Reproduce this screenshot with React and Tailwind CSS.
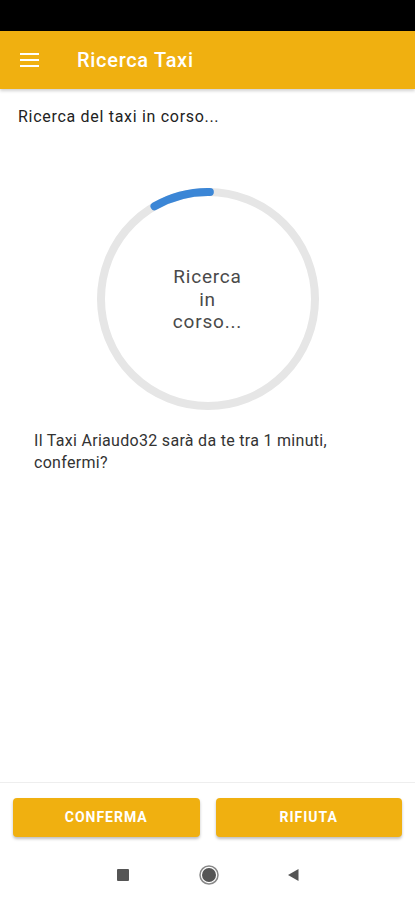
export default function App() {
  const cx = 111, cy = 111, r = 107;
  const a0 = (-30 * Math.PI) / 180;
  const a1 = (1 * Math.PI) / 180;
  const x0 = cx + r * Math.sin(a0), y0 = cy - r * Math.cos(a0);
  const x1 = cx + r * Math.sin(a1), y1 = cy - r * Math.cos(a1);
  return (
    <div className="h-[900px] w-[415px] flex flex-col bg-white overflow-hidden" style={{ fontFamily: "Roboto, 'Noto Sans', sans-serif" }}>
      <div className="h-[31px] bg-black shrink-0" />
      <div className="h-[58px] bg-[#f0b010] shrink-0 flex items-center shadow-[0_2px_3px_rgba(0,0,0,0.18)] relative z-10">
        <div className="w-[77px] pl-[20px] flex items-center">
          <svg width="20" height="14" viewBox="0 0 20 14">
            <rect x="0" y="0" width="19" height="2" fill="#fff" />
            <rect x="0" y="6" width="19" height="2" fill="#fff" />
            <rect x="0" y="12" width="19" height="2" fill="#fff" />
          </svg>
        </div>
        <div className="text-white text-[20px] tracking-[0.7px] font-medium">Ricerca Taxi</div>
      </div>
      <div className="flex-1 flex flex-col">
        <div className="pt-[18px] pl-[18px] text-[16px] tracking-[0.7px] leading-[20px] text-[#222]">Ricerca del taxi in corso...</div>
        <div className="mt-[61px] flex justify-center">
          <div className="relative w-[222px] h-[222px]">
            <svg width="222" height="222" viewBox="0 0 222 222">
              <circle cx={cx} cy={cy} r={r} fill="none" stroke="#e6e6e6" strokeWidth="8" />
              <path d={`M ${x0} ${y0} A ${r} ${r} 0 0 1 ${x1} ${y1}`} fill="none" stroke="#3b86d6" strokeWidth="8" strokeLinecap="round" />
            </svg>
            <div className="absolute inset-0 flex flex-col items-center justify-center text-[19px] tracking-[0.8px] leading-[22.5px] text-[#4a4a4a] text-center pt-[2px]">
              <div>Ricerca</div>
              <div>in</div>
              <div>corso...</div>
            </div>
          </div>
        </div>
        <div className="mt-[20px] pl-[34px] pr-[34px] text-[16px] tracking-[0.3px] leading-[22px] text-[#333]">
          Il Taxi Ariaudo32 sarà da te tra 1 minuti, confermi?
        </div>
      </div>
      <div className="shrink-0 border-t border-[#eeeeee] pt-[15px] pb-[12px] px-[13px] flex gap-[16px]">
        <button className="flex-1 h-[39px] rounded-[4px] bg-[#f0b010] text-white text-[14px] font-bold tracking-[1px] shadow-[0_2px_3px_rgba(0,0,0,0.25)]">CONFERMA</button>
        <button className="flex-1 h-[39px] rounded-[4px] bg-[#f0b010] text-white text-[14px] font-bold tracking-[1px] shadow-[0_2px_3px_rgba(0,0,0,0.25)]">RIFIUTA</button>
      </div>
      <div className="h-[51px] shrink-0 flex items-center justify-center">
        <div className="w-[12px] h-[12px] bg-[#555] rounded-[1px] mr-[70px]" />
        <svg width="20" height="20" viewBox="0 0 20 20" className="mr-[69px]">
          <circle cx="10" cy="10" r="9" fill="none" stroke="#888" strokeWidth="1.5" />
          <circle cx="10" cy="10" r="7" fill="#555" />
        </svg>
        <svg width="11" height="12" viewBox="0 0 11 12">
          <path d="M10.5 0 L0 6 L10.5 12 Z" fill="#555" />
        </svg>
      </div>
    </div>
  );
}
